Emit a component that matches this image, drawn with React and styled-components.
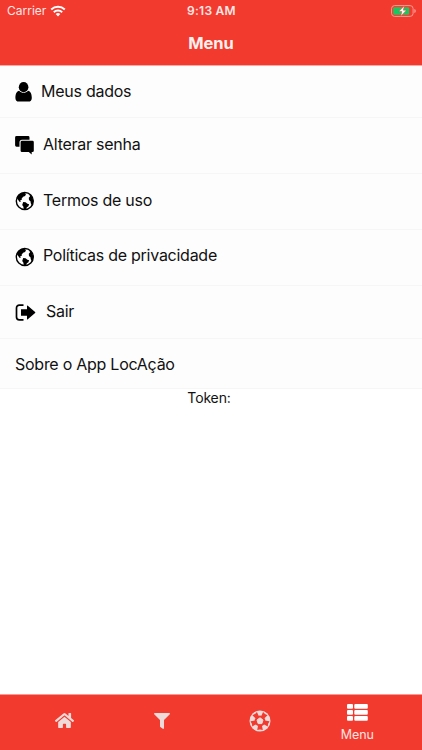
import React from 'react';
import styled, { createGlobalStyle } from 'styled-components';
import { FaHome, FaFilter } from 'react-icons/fa';

const Global = createGlobalStyle`
  * { box-sizing: border-box; }
  body { margin: 0; background: #fff; }
`;

const Screen = styled.div`
  display: flex;
  flex-direction: column;
  width: 100%;
  height: 100vh;
  overflow: hidden;
  background: #fff;
  color: #111;
  font-family: Inter, 'Liberation Sans', sans-serif;
`;

const Header = styled.header`
  height: 66px;
  flex: none;
  background: #f23a2f;
  border-bottom: 1px solid #f9aaa5;
  color: #fff;
`;

const StatusBar = styled.div`
  display: grid;
  grid-template-columns: 1fr auto 1fr;
  align-items: center;
  height: 22px;
  padding: 0 6px 0 7px;
  font-size: 12px;
  line-height: 22px;
  color: #fde6e4;
`;

const Carrier = styled.div`
  display: flex;
  align-items: center;
  gap: 4px;
`;

const Clock = styled.div`
  font-weight: 600;
  letter-spacing: 0.25px;
`;

const BatterySlot = styled.div`
  display: flex;
  justify-content: flex-end;
`;

const Title = styled.h1`
  margin: 0;
  height: 43px;
  line-height: 42px;
  text-align: center;
  font-size: 16.5px;
  font-weight: 700;
  color: #fff0ee;
`;

const List = styled.ul`
  list-style: none;
  margin: 0;
  padding: 0;
`;

const Item = styled.li`
  display: flex;
  align-items: center;
  height: ${(p) => p.$height}px;
  padding: 0 15px ${(p) => p.$lift}px;
  background: #fdfdfd;
  border-bottom: 1px solid #f6f6f6;
`;

const IconSlot = styled.span`
  display: flex;
  flex: none;
  width: ${(p) => p.$width}px;
  padding-top: 3px;
  color: #000;
`;

const Label = styled.span`
  font-size: 16px;
  line-height: 22px;
  letter-spacing: -0.26px;
  white-space: nowrap;
`;

const Token = styled.p`
  margin: 0;
  text-align: center;
  font-size: 14px;
  line-height: 18px;
  letter-spacing: -0.15px;
  padding-right: 4px;
`;

const TabBar = styled.nav`
  display: flex;
  flex: none;
  height: 56px;
  margin-top: auto;
  padding: 0 16px;
  background: #f23a2f;
  border-top: 1px solid #f79a94;
`;

const Tab = styled.div`
  flex: 1;
  display: flex;
  flex-direction: column;
  align-items: center;
  justify-content: ${(p) => (p.$active ? 'flex-start' : 'center')};
  padding-top: ${(p) => (p.$active ? 9 : 0)}px;
  padding-bottom: ${(p) => (p.$active ? 0 : 4)}px;
  color: ${(p) => (p.$active ? '#fff' : '#eedbd9')};
`;

const TabLabel = styled.span`
  margin-top: 6px;
  font-size: 12.5px;
  line-height: 16px;
  letter-spacing: -0.1px;
  color: #ffe3e0;
`;

const WifiIcon = () => (
  <svg width="16" height="12" viewBox="0 0 16 12" fill="none" stroke="#fff" strokeWidth="2">
    <path d="M1.2 4.4a10 10 0 0 1 13.6 0M3.8 7.2a6.1 6.1 0 0 1 8.4 0" />
    <path d="M5.7 9.1a3.4 3.4 0 0 1 4.6 0L8 11.5z" fill="#fff" stroke="none" />
  </svg>
);

const BatteryIcon = () => (
  <svg width="25" height="12" viewBox="0 0 25 12">
    <rect x=".6" y=".6" width="21.500" height="10.8" rx="3" fill="none" stroke="#f99b92" strokeWidth="1" />
    <rect x="2.2" y="2.2" width="16" height="7.6" rx="1.2" fill="#18c963" />
    <path d="M23.300 4v4c1-.4 1.5-1 1.5-2s-.5-1.600-1.500-2z" fill="#f99b92" />
    <path d="M13.4.8 7.800 6.500h3.100L9.700 11.200l5.700-6h-3.100z" fill="#fff" stroke="#f3392f" strokeWidth=".5" />
  </svg>
);

const UserIcon = () => (
  <svg width="18" height="20" viewBox="0 0 18 20">
    <ellipse cx="8.600" cy="5.200" rx="4.800" ry="5.100" />
    <path d="M4.200 8.700C6.500 11.400 10.700 11.400 13 8.700c2.600.4 3.800 3.400 3.800 7.200 0 2.300-1.300 3.700-3.400 3.700H3.800C1.700 19.600.4 18.200.4 15.900.4 12.100 1.600 9.100 4.200 8.700z" />
  </svg>
);

const ChatIcon = () => (
  <svg width="19" height="19" viewBox="0 0 19 19">
    <path d="M1.500 0h11.600a1.400 1.400 0 0 1 1.400 1.400v2.300H7A2.500 2.500 0 0 0 4.500 6.200v4.500h-3A1.400 1.400 0 0 1 .1 9.300V1.400A1.400 1.400 0 0 1 1.500 0z" />
    <path d="M7 4.800h10.400A1.400 1.400 0 0 1 18.800 6.200v8.500a1.400 1.400 0 0 1-1.400 1.400h-.7v2.300l-2.900-2.300H7a1.400 1.400 0 0 1-1.400-1.400V6.200A1.400 1.400 0 0 1 7 4.800z" />
  </svg>
);

const GlobeIcon = () => (
  <svg width="20" height="20" viewBox="0 0 20 20">
    <circle cx="9.800" cy="10" r="8.500" fill="none" stroke="currentColor" strokeWidth="1.400" />
    <path d="M9 1.500 11 3l-.9 2-2 .7-1.500 2 .2 1.400H5l1 1.200-1.300.8-1.500-2.200L1.700 7C2.800 3.600 5.600 1.600 9 1.500z" />
    <path d="m8.200 11 2.400.2 1.800 1.500 1.700.5-.7 2.100-1.500.9-1.100 2.400-1.900-.1-.6-2.900-1.100-1.700z" />
    <path d="m13.800 2.700 2.600 2 1.800 4.300-.2 3.600-1.200 1.800-1.100-2.500-.1-1.500-1.600-1.300-.2-2.300 1.300-1.600z" />
  </svg>
);

const ExitIcon = () => (
  <svg width="21" height="18" viewBox="0 0 21 18">
    <path d="M8.500 1.100H4.300A2.800 2.800 0 0 0 1.500 3.900v9.200a2.800 2.800 0 0 0 2.800 2.800h4.200" fill="none" stroke="currentColor" strokeWidth="1.700" />
    <path d="M6 5.200h6V2q0-.9.800-.3l7.300 6.300q.5.500 0 1l-7.300 6.300q-.8.600-.8-.3v-3.200H6z" />
  </svg>
);

const BallIcon = () => (
  <svg width="22" height="22" viewBox="0 0 22 22">
    <circle cx="11" cy="11" r="10.500" fill="currentColor" />
    <g fill="#f23a2f">
      {[36, 108, 180, 252, 324].map((angle) => (
        <path key={angle} transform={`rotate(${angle} 11 11)`} d="M8.200 1.900Q11 2.900 13.800 1.900L12.800 7H9.200z" />
      ))}
      <circle cx="11" cy="11" r="5.400" />
    </g>
    <path d="m11 7.800 3 2.200-1.100 3.600H9.100L8 10z" fill="currentColor" stroke="currentColor" strokeWidth="1" strokeLinejoin="round" />
  </svg>
);

const ListIcon = () => (
  <svg width="21" height="17" viewBox="0 0 21 17" fill="currentColor">
    {[0, 6, 12].map((y) => (
      <React.Fragment key={y}>
        <rect x="0" y={y} width="6" height="4.800" rx="1" />
        <rect x="7.300" y={y} width="13.500" height="4.800" rx="1" />
      </React.Fragment>
    ))}
  </svg>
);

const items = [
  { label: 'Meus dados', height: 52, lift: 2, slot: 26, icon: <UserIcon /> },
  { label: 'Alterar senha', height: 56, lift: 4, slot: 28, icon: <ChatIcon /> },
  { label: 'Termos de uso', height: 56, lift: 4, slot: 28, icon: <GlobeIcon /> },
  { label: 'Políticas de privacidade', height: 56, lift: 5, slot: 28, icon: <GlobeIcon /> },
  { label: 'Sair', height: 53, lift: 2, slot: 31, icon: <ExitIcon /> },
  { label: 'Sobre o App LocAção', height: 50, lift: 0 },
];

export default function App() {
  return (
    <Screen>
      <Global />
      <Header>
        <StatusBar>
          <Carrier>Carrier <WifiIcon /></Carrier>
          <Clock>9:13 AM</Clock>
          <BatterySlot><BatteryIcon /></BatterySlot>
        </StatusBar>
        <Title>Menu</Title>
      </Header>
      <List>
        {items.map(({ label, height, lift, slot, icon }) => (
          <Item key={label} $height={height} $lift={lift}>
            {icon && <IconSlot $width={slot}>{icon}</IconSlot>}
            <Label>{label}</Label>
          </Item>
        ))}
      </List>
      <Token>Token:</Token>
      <TabBar>
        <Tab><FaHome size={19} /></Tab>
        <Tab><FaFilter size={16} /></Tab>
        <Tab><BallIcon /></Tab>
        <Tab $active><ListIcon /><TabLabel>Menu</TabLabel></Tab>
      </TabBar>
    </Screen>
  );
}
